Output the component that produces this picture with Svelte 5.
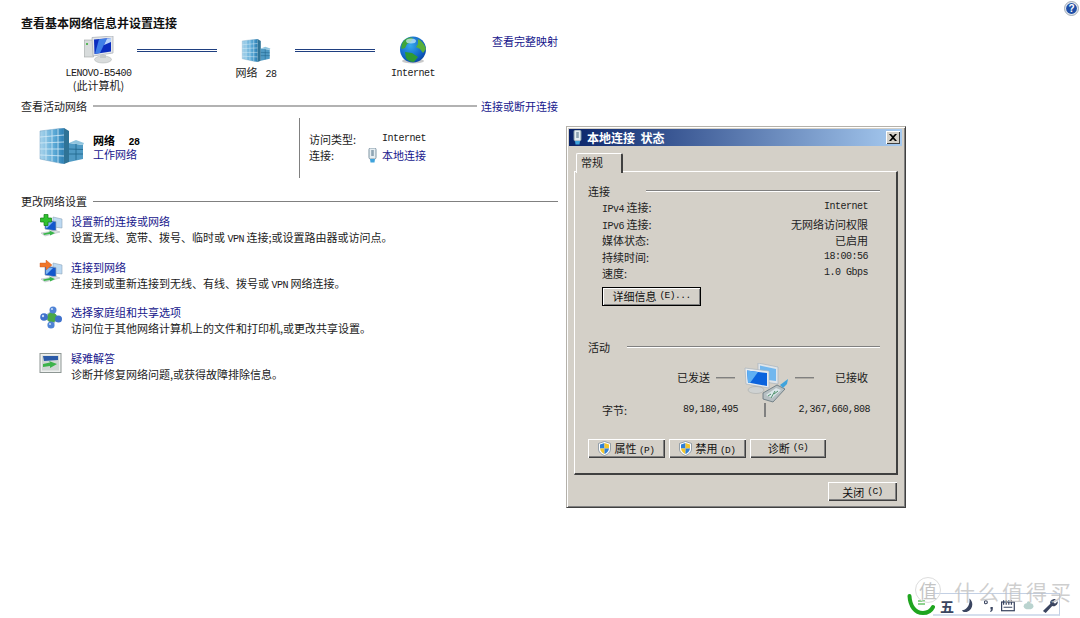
<script lang="ts">
  const statusRows = [
    { label: 'IPv4', cjk: '连接:', value: 'Internet', mono: true },
    { label: 'IPv6', cjk: '连接:', value: '无网络访问权限', mono: false },
    { label: '', cjk: '媒体状态:', value: '已启用', mono: false },
    { label: '', cjk: '持续时间:', value: '18:00:56', mono: true },
    { label: '', cjk: '速度:', value: '1.0 Gbps', mono: true }
  ];

  const tasks = [
    { kind: 'add', title: '设置新的连接或网络', pre: '设置无线、宽带、拨号、临时或', post: '连接;或设置路由器或访问点。', vpn: true },
    { kind: 'connect', title: '连接到网络', pre: '连接到或重新连接到无线、有线、拨号或', post: '网络连接。', vpn: true },
    { kind: 'share', title: '选择家庭组和共享选项', pre: '访问位于其他网络计算机上的文件和打印机,或更改共享设置。', post: '', vpn: false },
    { kind: 'fix', title: '疑难解答', pre: '诊断并修复网络问题,或获得故障排除信息。', post: '', vpn: false }
  ];
</script>

{#snippet building(w: number, h: number)}
  <svg width={w} height={h} viewBox="0 0 45 36">
    <defs>
      <linearGradient id="bl{w}" x1="0" x2="1" y1="0" y2="0">
        <stop offset="0" stop-color="#a9d4ec" />
        <stop offset="0.6" stop-color="#5ba9d6" />
        <stop offset="1" stop-color="#2b7fb4" />
      </linearGradient>
    </defs>
    <path d="M1 3 L25 0 V36 L1 31Z" fill="url(#bl{w})" stroke="#6d9fc0" stroke-width=".5" />
    <path d="M25 0 L30 3 V34 L25 36Z" fill="#2f7396" />
    <path d="M1 9 L25 7 M1 15 L25 14 M1 21 L25 21 M1 27 L25 28 M7 2.3 V32 M13 1.5 V33.5 M19 .8 V35" stroke="#d3ebf7" stroke-width=".8" fill="none" />
    <path d="M30 15 L44 17 V31 L30 34Z" fill="#4f9ac4" />
    <path d="M30 15 L37 12 L45 15 L44 17Z" fill="#8fc4de" />
    <path d="M30 21 L44 21.5 M30 26 L44 26 M37 16 V32" stroke="#1f648c" stroke-width=".8" />
  </svg>
{/snippet}

{#snippet plug()}
  <svg width="9" height="15" viewBox="0 0 9 15">
    <rect x="1" y="0" width="7" height="11" rx="1.5" fill="#e6eef2" stroke="#7f95a3" />
    <rect x="3.2" y="2" width="2.6" height="6" fill="#8fa5b3" />
    <path d="M2 11 H7 L6.5 14.5 H2.5Z" fill="#3fa3dc" />
  </svg>
{/snippet}

{#snippet shield()}
  <svg width="13" height="15" viewBox="0 0 13 15">
    <path d="M6.5 .5 L12.5 2.5 V8 C12.5 11 9.5 13.5 6.5 14.5 C3.5 13.5 .5 11 .5 8 V2.5Z" fill="#fff" stroke="#6f7f8f" stroke-width=".7" />
    <path d="M6.5 2 V7.5 H2 V3.4Z" fill="#2f7fd6" />
    <path d="M6.5 2 L11 3.4 V7.5 H6.5Z" fill="#f3c62d" />
    <path d="M2 7.5 H6.5 V13 C4.5 12 2.4 10.4 2 7.5Z" fill="#f3c62d" />
    <path d="M6.5 7.5 H11 C10.6 10.4 8.5 12 6.5 13Z" fill="#2f7fd6" />
  </svg>
{/snippet}

{#snippet taskIcon(kind: string)}
  <svg width="24" height="24" viewBox="0 0 24 24">
    {#if kind === 'add' || kind === 'connect'}
      <path d="M14 3 L23 5 V14 L14 13Z" fill="#bcd9f2" stroke="#8ea6ba" stroke-width=".6" />
      <path d="M6 6 L17 7.5 V17 L6 15Z" fill="#1257cc" stroke="#9aa7b2" stroke-width=".7" />
      <path d="M7 7 L14 8 L8 14 L7 13.8Z" fill="#7fb6f2" />
      <path d="M2 19 L17 16.5 L21 18 L6 22Z" fill="#dfe4e6" stroke="#a8b0b4" stroke-width=".5" />
      <path d="M4 19.5 L11 18 L10 16.5 L16 19 L11 21.5 L11 20 L5 21Z" fill="#39b54a" />
      {#if kind === 'add'}
        <path d="M5 .5 H9 V4 H12.5 V8 H9 V11.5 H5 V8 H1.5 V4 H5Z" fill="#2fc12f" stroke="#137f13" stroke-width=".7" />
      {:else}
        <path d="M1 3 H7 V0 L13 5 L7 10 V7 H1Z" fill="#f0762a" stroke="#c9541a" stroke-width=".4" />
      {/if}
    {:else if kind === 'share'}
      <path d="M5 12 L12 7 L19 12 L14 19Z" fill="none" stroke="#9fb5cf" stroke-width="1.5" />
      <circle cx="13" cy="12.5" r="5" fill="#49a849" />
      <circle cx="5" cy="12" r="3.8" fill="#3f71cc" />
      <circle cx="14" cy="5" r="3.5" fill="#4f83d6" />
      <circle cx="19.5" cy="14" r="3.5" fill="#3f71cc" />
      <circle cx="12" cy="20" r="3.6" fill="#4f83d6" />
      <circle cx="4" cy="11" r="1.2" fill="#c8dcf6" />
      <circle cx="13" cy="4" r="1.1" fill="#c8dcf6" />
      <circle cx="11" cy="19" r="1.1" fill="#c8dcf6" />
    {:else}
      <rect x="1" y="2.5" width="21" height="19" fill="#eef0ef" stroke="#8d9693" />
      <rect x="3" y="4.5" width="17" height="15" fill="#cfd6d4" />
      <path d="M4 5 L19 5 V9 L5 10Z" fill="#2b5aa8" />
      <path d="M4 13 L11 11.5 L10 10 L18 13 L11 17 L11 15 L4 16Z" fill="#3cb34a" />
    {/if}
  </svg>
{/snippet}

<div class="page">
  <main class="main">
    <h1>查看基本网络信息并设置连接</h1>

    <div class="map">
      <div class="node first">
        <svg width="30" height="28" viewBox="0 0 30 28">
          <rect x="0.5" y="4" width="9" height="17" fill="#d8dcdc" stroke="#a0a6a6" stroke-width=".6" />
          <rect x="2" y="7" width="2" height="2" fill="#5cb85c" />
          <path d="M8 1.5 L29 0 V17 L9 20Z" fill="#e3e6ea" stroke="#a5abb2" stroke-width=".7" />
          <path d="M10 3.5 L27 2 V15.5 L10.5 18Z" fill="#0a2dbf" />
          <path d="M15 3.2 L23 2.5 L16 17 L11 17.8 Z" fill="#3f7fe8" />
          <path d="M23 2.5 L27 2 V6 L20 9Z" fill="#b7d4fb" />
          <ellipse cx="19" cy="23.5" rx="8.5" ry="3.5" fill="#d9dcdc" stroke="#aab0b0" stroke-width=".5" />
          <rect x="16" y="19" width="6" height="3" fill="#c5c9c9" />
        </svg>
        <div class="node-label lat">LENOVO-B5400</div>
        <div class="node-label tight">(此计算机)</div>
      </div>
      <div class="wire"></div>
      <div class="node mid">
        {@render building(30, 23)}
        <div class="node-label">网络 <span class="lat">&nbsp;28</span></div>
      </div>
      <div class="wire"></div>
      <div class="node last">
        <svg width="28" height="28" viewBox="0 0 28 28">
          <defs>
            <radialGradient id="sea" cx=".4" cy=".35" r=".75">
              <stop offset="0" stop-color="#35a9ee" />
              <stop offset=".7" stop-color="#0f5fc4" />
              <stop offset="1" stop-color="#0a3c96" />
            </radialGradient>
          </defs>
          <ellipse cx="14" cy="25" rx="11" ry="2.5" fill="#c9c9c9" />
          <circle cx="14" cy="13.5" r="13" fill="url(#sea)" />
          <path d="M6 3.5 C9 1 13 1 14 2 L12 6 L8 8 L6 12 L2.5 13 C2 9 3 6 6 3.5Z" fill="#3fa53a" />
          <path d="M19 3 C23 5 26 9 27 13 L24 17 L21 13 L17 11 L19 8Z" fill="#58b03a" />
          <path d="M6 16 L13 17 L19 21 L15 26 C11 26 8 24 7 22Z" fill="#2f9a35" />
          <ellipse cx="12" cy="5" rx="5" ry="2.5" fill="#cfeefc" opacity=".7" />
        </svg>
        <div class="node-label lat">Internet</div>
      </div>
      <a class="link map-link" href="#map">查看完整映射</a>
    </div>

    <div class="section">
      <span>查看活动网络</span>
      <i class="rule thick"></i>
      <a class="link" href="#connect">连接或断开连接</a>
    </div>

    <div class="active">
      <div class="active-left">
        {@render building(45, 36)}
        <div class="active-name">
          <strong>网络 <span class="lat">&nbsp;&nbsp;28</span></strong>
          <a class="link" href="#work">工作网络</a>
        </div>
      </div>
      <div class="active-right">
        <span>访问类型:</span><span></span><span class="lat">Internet</span>
        <span>连接:</span><span class="plug">{@render plug()}</span><a class="link" href="#local">本地连接</a>
      </div>
    </div>

    <div class="section">
      <span>更改网络设置</span>
      <i class="rule"></i>
    </div>

    <div class="tasks">
      {#each tasks as task}
        <div class="task">
          <div class="task-icon">{@render taskIcon(task.kind)}</div>
          <div>
            <a class="link" href="#task">{task.title}</a>
            <p>{task.pre}{#if task.vpn}&nbsp;<span class="lat">VPN</span>&nbsp;{/if}{task.post}</p>
          </div>
        </div>
      {/each}
    </div>
  </main>

  <svg class="help" width="15" height="15" viewBox="0 0 15 15">
    <circle cx="7.5" cy="7.5" r="7" fill="#e3e8ee" stroke="#8d98a6" stroke-width=".8" />
    <circle cx="7.5" cy="7.5" r="5.4" fill="#1f4fa8" />
    <text x="7.5" y="11" text-anchor="middle" class="help-q">?</text>
  </svg>

  <section class="dialog">
    <header class="titlebar">
      <span class="title-icon">{@render plug()}</span>
      <span class="title-text">本地连接&nbsp;&nbsp;状态</span>
      <span class="close">
        <svg width="8" height="7" viewBox="0 0 8 7"><path d="M0 0 L2 0 L4 2 L6 0 L8 0 L5 3.5 L8 7 L6 7 L4 5 L2 7 L0 7 L3 3.5Z" fill="#000" /></svg>
      </span>
    </header>

    <div class="tab">常规</div>
    <div class="panel">
      <div class="group-head"><span>连接</span><i class="group-line long"></i></div>
      <div class="rows">
        {#each statusRows as row}
          <div class="row">
            <span>{#if row.label}<span class="lat">{row.label}</span>&nbsp;{/if}{row.cjk}</span>
            <span class:lat={row.mono}>{row.value}</span>
          </div>
        {/each}
      </div>
      <button class="btn default">详细信息 <span class="lat small">(E)...</span></button>

      <div class="group-head second"><span>活动</span><i class="group-line"></i></div>
      <div class="activity">
        <div class="cell sent"><span>已发送</span><i class="dash"></i></div>
        <div class="cell-icon">
          <svg width="44" height="41" viewBox="0 0 44 41">
            <path d="M14 0 L34 4 V21 L14 18Z" fill="#dfe5ea" stroke="#a9b3bb" stroke-width=".7" />
            <path d="M16 2.5 L32 6 V18 L16 16Z" fill="#72b7ee" />
            <path d="M1 5 L25 8 V25 L2 21Z" fill="#e8ecef" stroke="#a9b3bb" stroke-width=".7" />
            <path d="M3 7.5 L23 10 V23 L4 19.5Z" fill="#0b63dd" />
            <path d="M3 7.5 L14 9 L6 20 L4 19.5Z" fill="#5fb0f3" />
            <ellipse cx="12" cy="27" rx="8" ry="3.5" fill="#cfd2d2" stroke="#a0a5a5" stroke-width=".5" />
            <path d="M19 30 L33 22 L41 26 L29 39 L19 36Z" fill="#b6bfc2" stroke="#5f7078" stroke-width=".8" />
            <path d="M22 32 L32 25 L37 27 L28 35Z" fill="#dbe7ea" />
            <path d="M24 33 L27 31 M27 35 L31 28 M30 31 L34 28" stroke="#4f8f6a" stroke-width="1" />
            <path d="M36 22 L44 16 L43 21 L39 25Z" fill="#3fa3dc" />
          </svg>
        </div>
        <div class="cell recv"><i class="dash"></i><span>已接收</span></div>

        <div class="cell bytes"><span>字节:</span><span class="lat">89,180,495</span></div>
        <div class="cell-sep"><i></i></div>
        <div class="cell bytes right"><span class="lat">2,367,660,808</span></div>
      </div>

      <div class="actions">
        <button class="btn w77">{@render shield()}<span>属性 <span class="lat small">(P)</span></span></button>
        <button class="btn w77">{@render shield()}<span>禁用 <span class="lat small">(D)</span></span></button>
        <button class="btn w76">诊断 <span class="lat small">(G)</span></button>
      </div>
    </div>

    <footer class="footer">
      <button class="btn close-btn">关闭 <span class="lat small">(C)</span></button>
    </footer>
  </section>

  <div class="watermark">
    <div class="ime">
      <span class="five">五</span>
      <svg class="moon" width="13" height="15" viewBox="0 0 13 15"><path d="M8 0 C13 4 12 12 5 14.5 C2.5 15 .5 14 0 12.5 C5 12.5 9 7 8 0Z" fill="#3a4560" /></svg>
      <svg class="dots" width="10" height="14" viewBox="0 0 10 14"><circle cx="2" cy="3" r="1.6" fill="none" stroke="#3a4560" stroke-width="1.2" /><path d="M7 8 H9.5 V10 C9.5 12 8.5 13 7 13.5 L6.5 12.5 C7.5 12 8 11.3 8 10.8 H7Z" fill="#3a4560" /></svg>
      <svg width="15" height="13" viewBox="0 0 16 14"><rect x=".7" y="3" width="14.6" height="10" fill="#fff" stroke="#3a4560" stroke-width="1.4" /><path d="M3 1 V6 M6 1 V6 M9 1 V6 M12 1 V6 M3 9 H13" stroke="#3a4560" stroke-width="1.4" /></svg>
      <svg width="12" height="11" viewBox="0 0 16 12"><ellipse cx="8" cy="7" rx="7" ry="4.5" fill="#b9d3cf" /><circle cx="8" cy="2.5" r="2.5" fill="#b9d3cf" /></svg>
      <svg width="18" height="15" viewBox="0 0 18 16"><path d="M1 14 L9 6 C8 3 11 .5 15 1 L12 4 L14 6 L17 3.5 C17.5 7 14 10 11 8.5 L4 16Z" fill="#3a4560" /></svg>
    </div>
    <svg class="hook" width="28" height="22" viewBox="0 0 28 22">
      <path d="M2.5 2 C3 12 8 19 16 19 C20 19 24 17 26 13" fill="none" stroke="#1fa51f" stroke-width="4" stroke-linecap="round" />
      <path d="M11 7 H18 M11 10 H18" stroke="#1fa51f" stroke-width="1.2" />
    </svg>
    <span class="wm-zhi">值</span>
    <span class="wm-text">什么值得买</span>
  </div>
</div>

<style>
  :global(body) {
    margin: 0;
    background: #fff;
  }

  .page {
    position: relative;
    width: 1080px;
    height: 618px;
    overflow: hidden;
    font-family: "Noto Sans CJK SC", "Liberation Sans", sans-serif;
    font-size: 11px;
    line-height: 16px;
    color: #1a1a1a;
  }

  .lat {
    font-family: "Liberation Mono", "Noto Sans CJK SC", monospace;
    font-size: 10px;
    letter-spacing: -0.5px;
    line-height: 0;
  }

  .small {
    font-size: 9.5px;
  }

  .link {
    color: #16168c;
    text-decoration: none;
    white-space: nowrap;
  }

  .main {
    width: 537px;
    padding: 15px 0 0 21px;
  }

  h1 {
    margin: 0;
    font-size: 12px;
    line-height: 16px;
    font-weight: 700;
    color: #111;
  }

  .map {
    display: flex;
    align-items: flex-start;
    height: 62px;
    padding: 5px 0 0 39px;
  }

  .node {
    display: flex;
    flex-direction: column;
    align-items: center;
    line-height: 12px;
  }

  .node.first { width: 77px; }
  .node.mid { width: 78px; padding-top: 3px; }
  .node.last { width: 76px; }

  .node.first svg { margin-bottom: 4px; }
  .node.mid svg { margin-bottom: 4px; }
  .node.last svg { margin-bottom: 4px; }

  .node-label {
    height: 12px;
    line-height: 12px;
    white-space: nowrap;
  }

  .node-label.tight {
    margin-top: -1px;
  }

  .wire {
    width: 80px;
    height: 1px;
    margin-top: 13px;
    border-top: 1px solid #1f3f80;
    border-bottom: 1px solid #1f3f80;
  }

  .map-link {
    margin: -3px 0 0 auto;
  }

  .section {
    display: flex;
    align-items: center;
    gap: 6px;
    color: #222;
  }

  .rule {
    flex: 1;
    height: 1px;
    background: #808080;
  }

  .rule.thick {
    height: 2px;
    background: #b2b2b2;
  }

  .section .link {
    margin-left: -2px;
  }

  .active {
    display: flex;
    height: 60px;
    margin: 4px 0 15px;
  }

  .active-left {
    display: flex;
    width: 278px;
    gap: 9px;
    padding: 10px 0 0 18px;
    box-sizing: border-box;
  }

  .active-name {
    display: flex;
    flex-direction: column;
    padding-top: 5px;
    line-height: 14px;
  }

  .active-name strong {
    color: #000;
  }

  .active-right {
    display: grid;
    grid-template-columns: 59px 14px 1fr;
    grid-auto-rows: 16px;
    align-items: center;
    align-content: start;
    padding: 13px 0 0 9px;
    border-left: 1px solid #808080;
    flex: 1;
  }

  .plug {
    display: flex;
  }

  .tasks {
    display: flex;
    flex-direction: column;
    gap: 13.6px;
    margin-top: 4px;
  }

  .task {
    display: flex;
    gap: 8px;
    margin-left: 18px;
  }

  .task-icon {
    width: 24px;
    height: 24px;
    margin-top: 1px;
  }

  .task .link {
    display: block;
  }

  .task p {
    margin: 0;
    white-space: nowrap;
  }

  .help {
    position: absolute;
    top: 1px;
    right: 1px;
  }

  .help-q {
    font-family: "Liberation Sans", sans-serif;
    font-size: 10px;
    font-weight: 700;
    fill: #fff;
  }

  .dialog {
    position: absolute;
    left: 566px;
    top: 126px;
    width: 340px;
    height: 382px;
    box-sizing: border-box;
    padding: 3px;
    background: #d4d0c8;
    border: 1px solid #b4b1aa;
    border-right-color: #404040;
    border-bottom-color: #404040;
    box-shadow: inset 1px 1px 0 #fff, inset -1px -1px 0 #808080;
  }

  .titlebar {
    display: flex;
    align-items: center;
    height: 17px;
    margin: -1px 0 0 -1px;
    padding: 0 2px 0 4px;
    background: linear-gradient(90deg, #0a246a, #a6caf0);
    color: #fff;
  }

  .title-icon {
    display: flex;
    width: 9px;
    margin-right: 5px;
  }

  .title-text {
    font-size: 12px;
    font-weight: 700;
    line-height: 16px;
  }

  .close {
    display: flex;
    align-items: center;
    justify-content: center;
    width: 14px;
    height: 13px;
    margin-left: auto;
    background: #d4d0c8;
    box-shadow: inset 1px 1px 0 #fff, inset -1px -1px 0 #404040;
  }

  .tab {
    position: relative;
    z-index: 1;
    box-sizing: border-box;
    width: 47px;
    height: 20px;
    margin: 7px 0 -2px 6px;
    padding: 0 0 0 4px;
    background: #d4d0c8;
    border-top: 1px solid #fff;
    border-left: 1px solid #fff;
    border-right: 2px solid #404040;
    border-radius: 2px 2px 0 0;
    line-height: 17px;
  }

  .panel {
    box-sizing: border-box;
    width: 324px;
    height: 304px;
    margin-left: 4px;
    padding: 11px 16px 0 13px;
    border: 1px solid #fff;
    border-right: 2px solid #404040;
    border-bottom: 2px solid #404040;
  }

  .group-head {
    display: flex;
    align-items: center;
  }

  .group-head span {
    width: 39px;
  }

  .group-head.second {
    margin-top: 33px;
  }

  .group-line {
    flex: 1;
    height: 1px;
    background: #808080;
    border-bottom: 1px solid #fff;
  }

  .group-line.long {
    margin-left: 19px;
  }

  .rows {
    margin: 0 12px 0 14px;
  }

  .row {
    display: flex;
    justify-content: space-between;
    align-items: center;
    height: 16.5px;
    color: #222;
  }

  .btn {
    display: inline-flex;
    align-items: center;
    justify-content: center;
    gap: 3px;
    height: 19px;
    padding: 0;
    font: inherit;
    color: #111;
    background: #d4d0c8;
    border: none;
    box-shadow: inset 1px 1px 0 #fff, inset -1px -1px 0 #404040, inset -2px -2px 0 #808080;
    white-space: nowrap;
  }

  .btn.default {
    width: 99px;
    margin: 5px 0 0 14px;
    box-shadow: 0 0 0 1px #000 inset, inset 2px 2px 0 #fff, inset -2px -2px 0 #808080;
  }

  .activity {
    display: grid;
    grid-template-columns: 136px 54px 78px;
    grid-template-rows: 40px 14px;
    margin: 8px 0 0 14px;
  }

  .cell {
    display: flex;
    align-items: center;
  }

  .sent {
    justify-content: flex-end;
    gap: 6px;
    padding: 0 3px 11px 0;
  }

  .recv {
    justify-content: space-between;
    padding: 0 2px 11px 3px;
  }

  .dash {
    width: 19px;
    height: 1px;
    background: #808080;
    box-shadow: 0 1px 0 #b0aca4;
  }

  .cell-icon {
    display: flex;
    justify-content: center;
    margin-left: 2px;
  }

  .bytes {
    justify-content: space-between;
    line-height: 14px;
  }

  .bytes.right {
    justify-content: flex-end;
  }

  .cell-sep {
    display: flex;
    justify-content: center;
  }

  .cell-sep i {
    width: 2px;
    height: 14px;
    background: #808080;
  }

  .actions {
    display: flex;
    gap: 4px;
    margin-top: 22px;
  }

  .w77 { width: 77px; }
  .w76 { width: 76px; }

  .footer {
    display: flex;
    justify-content: flex-end;
    padding: 7px 5px 0 0;
  }

  .close-btn {
    width: 69px;
  }

  .watermark {
    position: absolute;
    left: 907px;
    top: 575px;
    width: 173px;
    height: 43px;
  }

  .ime {
    position: absolute;
    left: 26px;
    top: 18px;
    display: flex;
    align-items: center;
    gap: 8px;
    width: 127px;
    height: 23px;
    padding: 3px 0 0 7px;
    box-sizing: border-box;
    background: #fff;
    border-top: 1px solid #c3d0e4;
    border-right: 1px solid #c3d0e4;
    border-bottom: 2px solid #d5dfee;
    color: #3a4560;
  }

  .five {
    font-size: 14px;
    line-height: 16px;
    font-weight: 700;
  }

  .dots {
    margin-left: 2px;
  }

  .hook {
    position: absolute;
    left: 0;
    top: 19px;
  }

  .wm-zhi {
    position: absolute;
    left: 8px;
    top: 2px;
    width: 24px;
    height: 24px;
    border-radius: 50%;
    border: 1px solid #ddd;
    text-align: center;
    font-size: 18px;
    line-height: 24px;
    color: #c4c4c4;
  }

  .wm-text {
    position: absolute;
    left: 47px;
    top: 3px;
    font-size: 21px;
    line-height: 26px;
    letter-spacing: 3px;
    color: rgba(190, 190, 190, .75);
    white-space: nowrap;
  }
</style>
